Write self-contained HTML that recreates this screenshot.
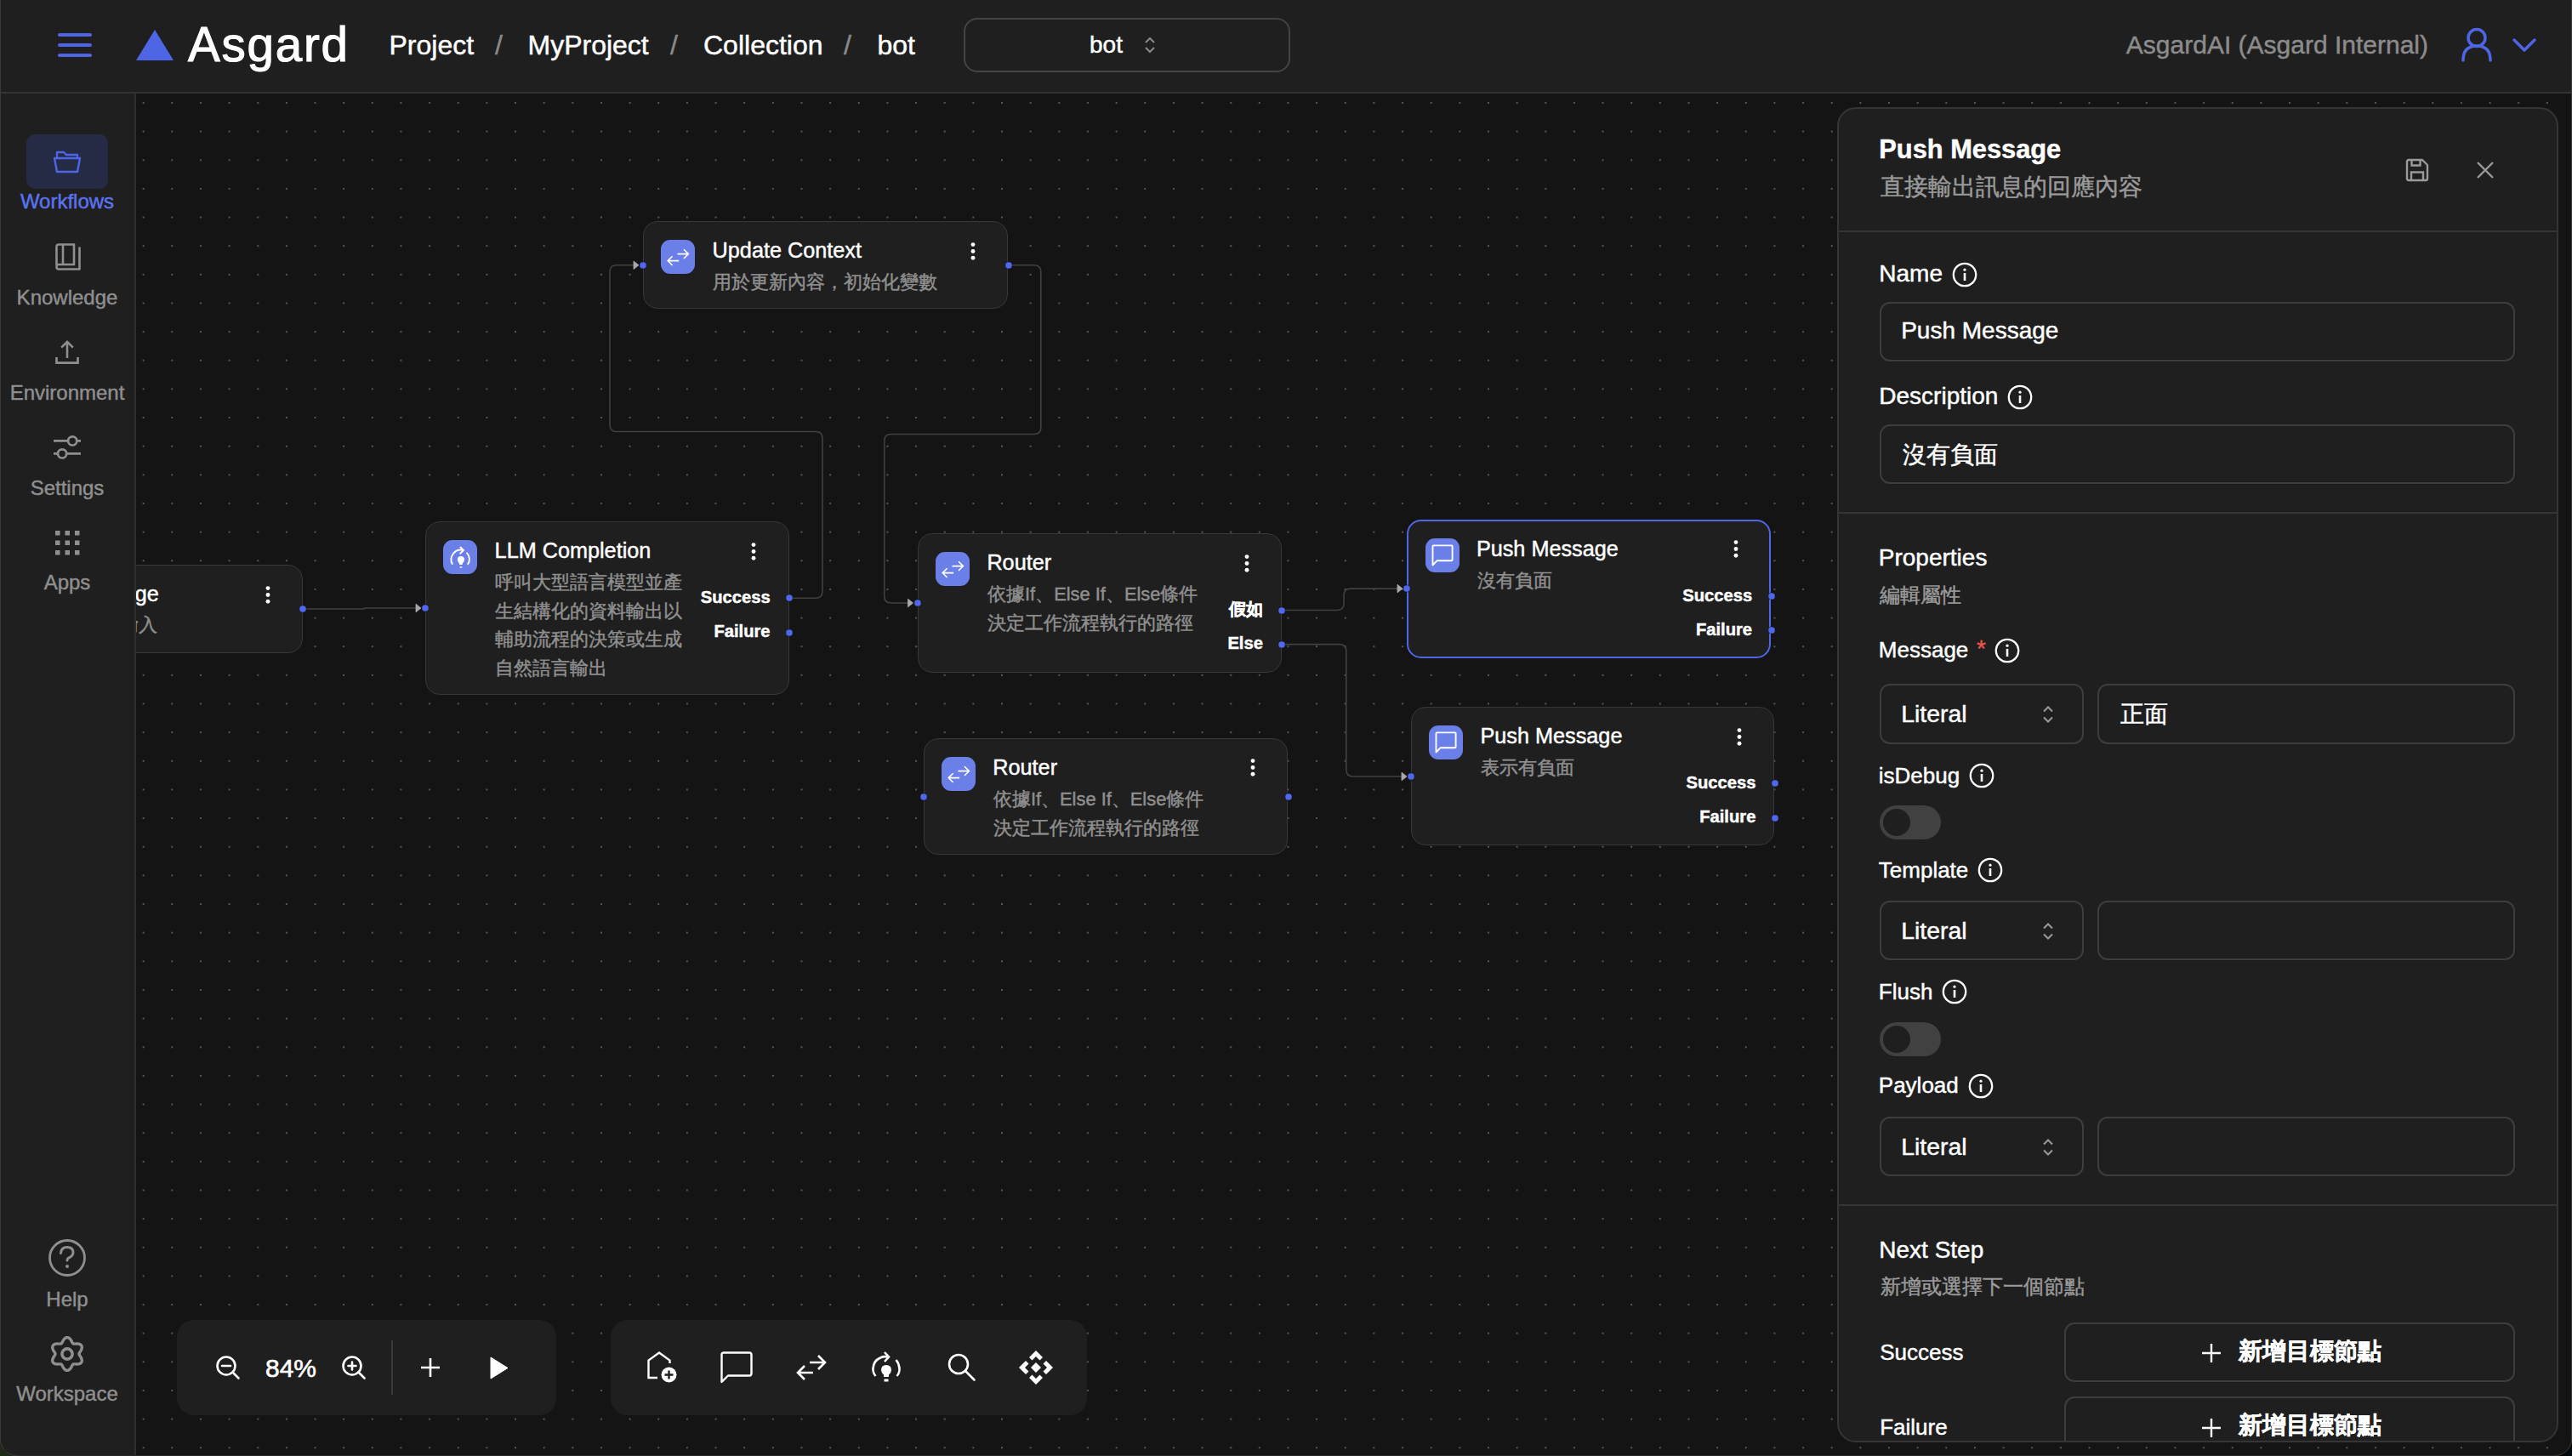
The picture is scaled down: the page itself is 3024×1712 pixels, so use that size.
<!DOCTYPE html>
<html lang="zh-Hant"><head><meta charset="utf-8"><title>Asgard</title>
<style>
html,body{margin:0;padding:0;}
body{width:3024px;height:1712px;position:relative;overflow:hidden;background:#141414;font-family:"Liberation Sans",sans-serif;}
.t{position:absolute;white-space:nowrap;line-height:1;-webkit-text-stroke-width:0.45px;}
.b{position:absolute;box-sizing:border-box;}
svg.b{overflow:visible;}
</style></head><body>

<svg class="b" style="left:0;top:0" width="3024" height="1712"><defs><pattern id="dots" x="-0.575" y="19.025" width="33.645" height="33.645" patternUnits="userSpaceOnUse"><rect x="0" y="0" width="2" height="2" fill="#555"/></pattern></defs><rect x="160" y="110" width="2864" height="1602" fill="url(#dots)"/></svg>
<svg class="b" style="left:0;top:0" width="3024" height="1712"><path d="M356.00 716.00 L427.50 716.00 Q428.00 716.00 428.00 715.50 L428.00 715.50 Q428.00 715.00 428.50 715.00 L489.00 715.00" fill="none" stroke="#404040" stroke-width="1.6"/><path d="M928.50 703.30 L959.00 703.30 Q967.00 703.30 967.00 695.30 L967.00 515.50 Q967.00 507.50 959.00 507.50 L725.00 507.50 Q717.00 507.50 717.00 499.50 L717.00 319.80 Q717.00 311.80 725.00 311.80 L745.00 311.80" fill="none" stroke="#404040" stroke-width="1.6"/><path d="M1185.00 311.80 L1215.80 311.80 Q1223.80 311.80 1223.80 319.80 L1223.80 502.50 Q1223.80 510.50 1215.80 510.50 L1047.70 510.50 Q1039.70 510.50 1039.70 518.50 L1039.70 701.00 Q1039.70 709.00 1047.70 709.00 L1067.50 709.00" fill="none" stroke="#404040" stroke-width="1.6"/><path d="M1507.00 717.50 L1572.00 717.50 Q1580.00 717.50 1580.00 709.50 L1580.00 700.10 Q1580.00 692.10 1588.00 692.10 L1643.00 692.10" fill="none" stroke="#404040" stroke-width="1.6"/><path d="M1507.00 757.60 L1574.80 757.60 Q1582.80 757.60 1582.80 765.60 L1582.80 905.00 Q1582.80 913.00 1590.80 913.00 L1648.00 913.00" fill="none" stroke="#404040" stroke-width="1.6"/><path d="M489.00 710.20 L495.00 715.00 L489.00 719.80 Z" fill="#a8a8a8" stroke="#a8a8a8" stroke-width="0.8" stroke-linejoin="round"/><path d="M745.00 307.00 L751.00 311.80 L745.00 316.60 Z" fill="#a8a8a8" stroke="#a8a8a8" stroke-width="0.8" stroke-linejoin="round"/><path d="M1067.50 704.20 L1073.50 709.00 L1067.50 713.80 Z" fill="#a8a8a8" stroke="#a8a8a8" stroke-width="0.8" stroke-linejoin="round"/><path d="M1643.00 687.30 L1649.00 692.10 L1643.00 696.90 Z" fill="#a8a8a8" stroke="#a8a8a8" stroke-width="0.8" stroke-linejoin="round"/><path d="M1648.00 908.20 L1654.00 913.00 L1648.00 917.80 Z" fill="#a8a8a8" stroke="#a8a8a8" stroke-width="0.8" stroke-linejoin="round"/></svg>
<div class="b" style="left:756.00px;top:260.00px;width:429.00px;height:103.00px;background:#1f1f1f;border:1.7px solid #383838;border-radius:16.8px;"></div>
<svg class="b" style="left:777.30px;top:281.70px;" width="40" height="40" viewBox="0 0 40 40"><rect x="0" y="0" width="40" height="40" rx="11" fill="#6b7fe8"/><path d="M19.5 16.6 H32.4 M27 11.2 L32.4 16.6 L27 22" fill="none" stroke="#fff" stroke-width="1.6"/><path d="M21.2 24.6 H8.2 M13.6 19.2 L8.2 24.6 L13.6 30" fill="none" stroke="#fff" stroke-width="1.6"/></svg>
<div class="t" style="top:281.83px;font-size:25.24px;color:#fff;left:837.60px;">Update Context</div>
<div class="t" style="top:320.98px;font-size:21.87px;color:#8f8f8f;left:838.20px;">用於更新內容，初始化變數</div>
<svg class="b" style="left:1140.70px;top:284.50px;" width="6" height="20" viewBox="0 0 6 20"><circle cx="3" cy="2.6" r="2.45" fill="#fff"/><circle cx="3" cy="10.43" r="2.45" fill="#fff"/><circle cx="3" cy="18.26" r="2.45" fill="#fff"/></svg>
<svg class="b" style="left:751.00px;top:306.50px;" width="10" height="10" viewBox="0 0 10 10"><circle cx="5" cy="5" r="4.1" fill="#5068f0" stroke="#141414" stroke-width="0.6"/></svg>
<svg class="b" style="left:1180.50px;top:306.50px;" width="10" height="10" viewBox="0 0 10 10"><circle cx="5" cy="5" r="4.1" fill="#5068f0" stroke="#141414" stroke-width="0.6"/></svg>
<div class="b" style="left:500.00px;top:613.00px;width:427.60px;height:203.80px;background:#1f1f1f;border:1.7px solid #383838;border-radius:16.8px;"></div>
<svg class="b" style="left:521.30px;top:634.70px;" width="40" height="40" viewBox="0 0 40 40"><rect x="0" y="0" width="40" height="40" rx="11" fill="#6b7fe8"/><path d="M11.1 28.8 A11.4 11.4 0 0 1 23.6 11.9" fill="none" stroke="#fff" stroke-width="1.9"/><path d="M19.9 8 L24 12 L19.7 16.2" fill="none" stroke="#fff" stroke-width="1.9"/><path d="M27.5 14.8 A10.3 10.3 0 0 1 28.8 28.8" fill="none" stroke="#fff" stroke-width="1.9"/><path d="M20.9 19.1 Q25 19.1 25 23 Q25 25 23.3 26.8 L22.4 29.1 H19.4 L18.5 26.8 Q16.9 25 16.9 23 Q16.9 19.1 20.9 19.1 Z" fill="#fff"/><rect x="19.5" y="31.3" width="3" height="1.4" rx="0.7" fill="#fff"/></svg>
<div class="t" style="top:634.83px;font-size:25.24px;color:#fff;left:581.60px;">LLM Completion</div>
<div class="t" style="top:673.98px;font-size:21.87px;color:#8f8f8f;left:582.20px;">呼叫大型語言模型並產</div>
<div class="t" style="top:707.63px;font-size:21.87px;color:#8f8f8f;left:582.20px;">生結構化的資料輸出以</div>
<div class="t" style="top:741.28px;font-size:21.87px;color:#8f8f8f;left:582.20px;">輔助流程的決策或生成</div>
<div class="t" style="top:774.93px;font-size:21.87px;color:#8f8f8f;left:582.20px;">自然語言輸出</div>
<svg class="b" style="left:883.30px;top:637.50px;" width="6" height="20" viewBox="0 0 6 20"><circle cx="3" cy="2.6" r="2.45" fill="#fff"/><circle cx="3" cy="10.43" r="2.45" fill="#fff"/><circle cx="3" cy="18.26" r="2.45" fill="#fff"/></svg>
<svg class="b" style="left:495.00px;top:709.90px;" width="10" height="10" viewBox="0 0 10 10"><circle cx="5" cy="5" r="4.1" fill="#5068f0" stroke="#141414" stroke-width="0.6"/></svg>
<div class="t" style="top:691.71px;font-size:20.19px;color:#fff;font-weight:700;right:2118.40px;">Success</div>
<svg class="b" style="left:923.10px;top:698.10px;" width="10" height="10" viewBox="0 0 10 10"><circle cx="5" cy="5" r="4.1" fill="#5068f0" stroke="#141414" stroke-width="0.6"/></svg>
<div class="t" style="top:731.91px;font-size:20.19px;color:#fff;font-weight:700;right:2118.40px;">Failure</div>
<svg class="b" style="left:923.10px;top:738.50px;" width="10" height="10" viewBox="0 0 10 10"><circle cx="5" cy="5" r="4.1" fill="#5068f0" stroke="#141414" stroke-width="0.6"/></svg>
<div class="b" style="left:1078.80px;top:627.40px;width:428.10px;height:163.50px;background:#1f1f1f;border:1.7px solid #383838;border-radius:16.8px;"></div>
<svg class="b" style="left:1100.10px;top:649.10px;" width="40" height="40" viewBox="0 0 40 40"><rect x="0" y="0" width="40" height="40" rx="11" fill="#6b7fe8"/><path d="M19.5 16.6 H32.4 M27 11.2 L32.4 16.6 L27 22" fill="none" stroke="#fff" stroke-width="1.6"/><path d="M21.2 24.6 H8.2 M13.6 19.2 L8.2 24.6 L13.6 30" fill="none" stroke="#fff" stroke-width="1.6"/></svg>
<div class="t" style="top:649.23px;font-size:25.24px;color:#fff;left:1160.40px;">Router</div>
<div class="t" style="top:688.38px;font-size:21.87px;color:#8f8f8f;left:1161.00px;">依據If、Else If、Else條件</div>
<div class="t" style="top:722.03px;font-size:21.87px;color:#8f8f8f;left:1161.00px;">決定工作流程執行的路徑</div>
<svg class="b" style="left:1462.60px;top:651.90px;" width="6" height="20" viewBox="0 0 6 20"><circle cx="3" cy="2.6" r="2.45" fill="#fff"/><circle cx="3" cy="10.43" r="2.45" fill="#fff"/><circle cx="3" cy="18.26" r="2.45" fill="#fff"/></svg>
<svg class="b" style="left:1073.80px;top:704.15px;" width="10" height="10" viewBox="0 0 10 10"><circle cx="5" cy="5" r="4.1" fill="#5068f0" stroke="#141414" stroke-width="0.6"/></svg>
<div class="t" style="top:706.11px;font-size:20.19px;color:#fff;font-weight:700;right:1539.10px;">假如</div>
<svg class="b" style="left:1502.40px;top:712.50px;" width="10" height="10" viewBox="0 0 10 10"><circle cx="5" cy="5" r="4.1" fill="#5068f0" stroke="#141414" stroke-width="0.6"/></svg>
<div class="t" style="top:746.31px;font-size:20.19px;color:#fff;font-weight:700;right:1539.10px;">Else</div>
<svg class="b" style="left:1502.40px;top:752.90px;" width="10" height="10" viewBox="0 0 10 10"><circle cx="5" cy="5" r="4.1" fill="#5068f0" stroke="#141414" stroke-width="0.6"/></svg>
<div class="b" style="left:1085.70px;top:867.90px;width:428.40px;height:137.30px;background:#1f1f1f;border:1.7px solid #383838;border-radius:16.8px;"></div>
<svg class="b" style="left:1107.00px;top:889.60px;" width="40" height="40" viewBox="0 0 40 40"><rect x="0" y="0" width="40" height="40" rx="11" fill="#6b7fe8"/><path d="M19.5 16.6 H32.4 M27 11.2 L32.4 16.6 L27 22" fill="none" stroke="#fff" stroke-width="1.6"/><path d="M21.2 24.6 H8.2 M13.6 19.2 L8.2 24.6 L13.6 30" fill="none" stroke="#fff" stroke-width="1.6"/></svg>
<div class="t" style="top:889.73px;font-size:25.24px;color:#fff;left:1167.30px;">Router</div>
<div class="t" style="top:928.88px;font-size:21.87px;color:#8f8f8f;left:1167.90px;">依據If、Else If、Else條件</div>
<div class="t" style="top:962.53px;font-size:21.87px;color:#8f8f8f;left:1167.90px;">決定工作流程執行的路徑</div>
<svg class="b" style="left:1469.80px;top:892.40px;" width="6" height="20" viewBox="0 0 6 20"><circle cx="3" cy="2.6" r="2.45" fill="#fff"/><circle cx="3" cy="10.43" r="2.45" fill="#fff"/><circle cx="3" cy="18.26" r="2.45" fill="#fff"/></svg>
<svg class="b" style="left:1080.70px;top:931.55px;" width="10" height="10" viewBox="0 0 10 10"><circle cx="5" cy="5" r="4.1" fill="#5068f0" stroke="#141414" stroke-width="0.6"/></svg>
<svg class="b" style="left:1509.60px;top:931.55px;" width="10" height="10" viewBox="0 0 10 10"><circle cx="5" cy="5" r="4.1" fill="#5068f0" stroke="#141414" stroke-width="0.6"/></svg>
<div class="b" style="left:1654.30px;top:610.80px;width:427.80px;height:162.90px;background:#1f1f1f;border:2.1px solid #5066e6;border-radius:16.8px;"></div>
<svg class="b" style="left:1675.60px;top:632.50px;" width="40" height="40" viewBox="0 0 40 40"><rect x="0" y="0" width="40" height="40" rx="11" fill="#6b7fe8"/><path d="M8.5 31.6 V9.3 Q8.5 8.4 9.4 8.4 H30.7 Q31.6 8.4 31.6 9.3 V25.3 Q31.6 26.2 30.7 26.2 H13.6 Z" fill="none" stroke="#fff" stroke-width="1.9" stroke-linejoin="round"/></svg>
<div class="t" style="top:632.63px;font-size:25.24px;color:#fff;left:1735.90px;">Push Message</div>
<div class="t" style="top:671.78px;font-size:21.87px;color:#8f8f8f;left:1736.50px;">沒有負面</div>
<svg class="b" style="left:2037.80px;top:635.30px;" width="6" height="20" viewBox="0 0 6 20"><circle cx="3" cy="2.6" r="2.45" fill="#fff"/><circle cx="3" cy="10.43" r="2.45" fill="#fff"/><circle cx="3" cy="18.26" r="2.45" fill="#fff"/></svg>
<svg class="b" style="left:1649.30px;top:687.25px;" width="10" height="10" viewBox="0 0 10 10"><circle cx="5" cy="5" r="4.1" fill="#5068f0" stroke="#141414" stroke-width="0.6"/></svg>
<div class="t" style="top:689.51px;font-size:20.19px;color:#fff;font-weight:700;right:963.90px;">Success</div>
<svg class="b" style="left:2077.60px;top:695.90px;" width="10" height="10" viewBox="0 0 10 10"><circle cx="5" cy="5" r="4.1" fill="#5068f0" stroke="#141414" stroke-width="0.6"/></svg>
<div class="t" style="top:729.71px;font-size:20.19px;color:#fff;font-weight:700;right:963.90px;">Failure</div>
<svg class="b" style="left:2077.60px;top:736.30px;" width="10" height="10" viewBox="0 0 10 10"><circle cx="5" cy="5" r="4.1" fill="#5068f0" stroke="#141414" stroke-width="0.6"/></svg>
<div class="b" style="left:1658.90px;top:831.10px;width:427.50px;height:163.30px;background:#1f1f1f;border:1.7px solid #383838;border-radius:16.8px;"></div>
<svg class="b" style="left:1680.20px;top:852.80px;" width="40" height="40" viewBox="0 0 40 40"><rect x="0" y="0" width="40" height="40" rx="11" fill="#6b7fe8"/><path d="M8.5 31.6 V9.3 Q8.5 8.4 9.4 8.4 H30.7 Q31.6 8.4 31.6 9.3 V25.3 Q31.6 26.2 30.7 26.2 H13.6 Z" fill="none" stroke="#fff" stroke-width="1.9" stroke-linejoin="round"/></svg>
<div class="t" style="top:852.93px;font-size:25.24px;color:#fff;left:1740.50px;">Push Message</div>
<div class="t" style="top:892.08px;font-size:21.87px;color:#8f8f8f;left:1741.10px;">表示有負面</div>
<svg class="b" style="left:2042.10px;top:855.60px;" width="6" height="20" viewBox="0 0 6 20"><circle cx="3" cy="2.6" r="2.45" fill="#fff"/><circle cx="3" cy="10.43" r="2.45" fill="#fff"/><circle cx="3" cy="18.26" r="2.45" fill="#fff"/></svg>
<svg class="b" style="left:1653.90px;top:907.75px;" width="10" height="10" viewBox="0 0 10 10"><circle cx="5" cy="5" r="4.1" fill="#5068f0" stroke="#141414" stroke-width="0.6"/></svg>
<div class="t" style="top:909.81px;font-size:20.19px;color:#fff;font-weight:700;right:959.60px;">Success</div>
<svg class="b" style="left:2081.90px;top:916.20px;" width="10" height="10" viewBox="0 0 10 10"><circle cx="5" cy="5" r="4.1" fill="#5068f0" stroke="#141414" stroke-width="0.6"/></svg>
<div class="t" style="top:950.01px;font-size:20.19px;color:#fff;font-weight:700;right:959.60px;">Failure</div>
<svg class="b" style="left:2081.90px;top:956.60px;" width="10" height="10" viewBox="0 0 10 10"><circle cx="5" cy="5" r="4.1" fill="#5068f0" stroke="#141414" stroke-width="0.6"/></svg>
<div class="b" style="left:-70.00px;top:664.40px;width:426.00px;height:103.60px;background:#1f1f1f;border:1.7px solid #383838;border-radius:16.8px;"></div>
<div class="t" style="top:685.93px;font-size:25.24px;color:#fff;right:2837.30px;">Push Message</div>
<div class="t" style="top:724.48px;font-size:21.87px;color:#8f8f8f;right:2839.00px;">接收使用者輸入</div>
<svg class="b" style="left:311.50px;top:689.00px;" width="6" height="20" viewBox="0 0 6 20"><circle cx="3" cy="2.6" r="2.45" fill="#fff"/><circle cx="3" cy="10.43" r="2.45" fill="#fff"/><circle cx="3" cy="18.26" r="2.45" fill="#fff"/></svg>
<svg class="b" style="left:351.00px;top:711.20px;" width="10" height="10" viewBox="0 0 10 10"><circle cx="5" cy="5" r="4.1" fill="#5068f0" stroke="#141414" stroke-width="0.6"/></svg>
<div class="b" style="left:0.00px;top:0.00px;width:3024.00px;height:108.00px;background:#1f1f1f;"></div>
<div class="b" style="left:0.00px;top:108.00px;width:3024.00px;height:2.00px;background:#333;"></div>
<div class="b" style="left:0.00px;top:110.00px;width:158.00px;height:1602.00px;background:#1f1f1f;"></div>
<div class="b" style="left:158.00px;top:110.00px;width:2.00px;height:1602.00px;background:#2e2e2e;"></div>
<div class="b" style="left:0.00px;top:0.00px;width:1.00px;height:1712.00px;background:#3a3a3a;"></div>
<div class="b" style="left:3023.00px;top:0.00px;width:1.00px;height:1712.00px;background:#3a3a3a;"></div>
<div class="b" style="left:0.00px;top:1711.00px;width:3024.00px;height:1.00px;background:#2a2a2a;"></div>
<svg class="b" style="left:0.00px;top:1692.00px;" width="20" height="20" viewBox="0 0 20 20"><path d="M0 0 A20 20 0 0 0 20 20 L0 20 Z" fill="#1f2a19"/><path d="M0.5 0 A19.5 19.5 0 0 0 20 19.5" fill="none" stroke="#3a3a3a" stroke-width="1"/></svg>
<svg class="b" style="left:3004.00px;top:1692.00px;" width="20" height="20" viewBox="0 0 20 20"><path d="M20 0 A20 20 0 0 1 0 20 L20 20 Z" fill="#06090b"/><path d="M19.5 0 A19.5 19.5 0 0 1 0 19.5" fill="none" stroke="#3a3a3a" stroke-width="1"/></svg>
<div class="b" style="left:68.00px;top:39.00px;width:40.00px;height:4.00px;background:#4e65e6;border-radius:2px;"></div>
<div class="b" style="left:68.00px;top:51.00px;width:40.00px;height:4.00px;background:#4e65e6;border-radius:2px;"></div>
<div class="b" style="left:68.00px;top:63.00px;width:40.00px;height:4.00px;background:#4e65e6;border-radius:2px;"></div>
<svg class="b" style="left:160.00px;top:35.00px;" width="44" height="36" viewBox="0 0 44 36"><polygon points="0,36 44,36 22,0" fill="#4e65e6"/></svg>
<div class="t" style="top:25.46px;font-size:56.5px;color:#fff;left:221.00px;letter-spacing:1.8px;-webkit-text-stroke:1.1px #fff;">Asgard</div>
<div class="t" style="top:36.91px;font-size:32px;color:#fff;left:457.50px;">Project</div>
<div class="t" style="top:36.91px;font-size:32px;color:#8a8a8a;left:582.00px;">/</div>
<div class="t" style="top:36.91px;font-size:32px;color:#fff;left:620.50px;">MyProject</div>
<div class="t" style="top:36.91px;font-size:32px;color:#8a8a8a;left:788.00px;">/</div>
<div class="t" style="top:36.91px;font-size:32px;color:#fff;left:827.00px;">Collection</div>
<div class="t" style="top:36.91px;font-size:32px;color:#8a8a8a;left:992.00px;">/</div>
<div class="t" style="top:36.91px;font-size:32px;color:#fff;left:1031.50px;">bot</div>
<div class="b" style="left:1133.00px;top:21.00px;width:384.00px;height:64.00px;border:2px solid #444;border-radius:16px;"></div>
<div class="t" style="top:38.89px;font-size:28px;color:#fff;left:1281.00px;">bot</div>
<svg class="b" style="left:1346.00px;top:43.00px;" width="12" height="20" viewBox="0 0 12 20"><path d="M1 7 L6 2 L11 7 M1 13 L6 18 L11 13" fill="none" stroke="#8a8a8a" stroke-width="2"/></svg>
<div class="t" style="top:37.90px;font-size:30px;color:#8c8c8c;right:169.00px;">AsgardAI (Asgard Internal)</div>
<svg class="b" style="left:2894.00px;top:33.00px;" width="36" height="40" viewBox="0 0 36 40"><circle cx="18" cy="11.5" r="10" fill="none" stroke="#4e65e6" stroke-width="3.5"/><path d="M2 38 C2 25 9 21 18 21 C27 21 34 25 34 38" fill="none" stroke="#4e65e6" stroke-width="3.5" stroke-linecap="round"/></svg>
<svg class="b" style="left:2954.00px;top:45.00px;" width="28" height="16" viewBox="0 0 28 16"><path d="M2 2 L14 14 L26 2" fill="none" stroke="#4e65e6" stroke-width="3.5" stroke-linecap="round" stroke-linejoin="round"/></svg>
<div class="b" style="left:31.00px;top:158.00px;width:96.00px;height:64.00px;background:#262b45;border-radius:10px;"></div>
<svg class="b" style="left:63.00px;top:177.00px;" width="32" height="26" viewBox="0 0 32 26"><path d="M4 8 V2 H12 L15 5 H28 V9" fill="none" stroke="#4e65e6" stroke-width="2.4" stroke-linejoin="round"/><path d="M1 9 H31 L28 25 H4 Z" fill="none" stroke="#4e65e6" stroke-width="2.4" stroke-linejoin="round"/></svg>
<div class="t" style="top:225.18px;font-size:24px;color:#5b73f0;left:79.00px;transform:translateX(-50%);">Workflows</div>
<svg class="b" style="left:65.00px;top:286.00px;" width="30" height="32" viewBox="0 0 30 32"><path d="M1.5 26 V4 Q1.5 1.5 4 1.5 H22 V25 H4 Q1.5 25 1.5 27.5 Q1.5 30.5 4 30.5 H28.5 V4.5" fill="none" stroke="#8f8f8f" stroke-width="2.6" stroke-linejoin="round"/><path d="M9 1.5 V25" stroke="#8f8f8f" stroke-width="2.6"/></svg>
<div class="t" style="top:338.18px;font-size:24px;color:#8f8f8f;left:79.00px;transform:translateX(-50%);">Knowledge</div>
<svg class="b" style="left:65.00px;top:400.00px;" width="28" height="28" viewBox="0 0 28 28"><path d="M14 21 V2.2 M7.2 8.6 L14 1.8 L20.8 8.6" fill="none" stroke="#8f8f8f" stroke-width="2.6"/><path d="M1.5 20 V26.6 H26.5 V20" fill="none" stroke="#8f8f8f" stroke-width="2.7"/></svg>
<div class="t" style="top:449.68px;font-size:24px;color:#8f8f8f;left:79.00px;transform:translateX(-50%);">Environment</div>
<svg class="b" style="left:63.00px;top:511.00px;" width="32" height="30" viewBox="0 0 32 30"><path d="M0 7.4 H17 M27.4 7.4 H32 M0 22.4 H5 M15.2 22.4 H32" stroke="#8f8f8f" stroke-width="2.6"/><circle cx="22.2" cy="7.4" r="5.1" fill="none" stroke="#8f8f8f" stroke-width="2.7"/><circle cx="10.1" cy="22.4" r="5.1" fill="none" stroke="#8f8f8f" stroke-width="2.7"/></svg>
<div class="t" style="top:561.68px;font-size:24px;color:#8f8f8f;left:79.00px;transform:translateX(-50%);">Settings</div>
<svg class="b" style="left:65.00px;top:624.00px;" width="28.5" height="28.5" viewBox="0 0 28.5 28.5"><rect x="0.0" y="0.0" width="5.5" height="5.5" fill="#8f8f8f"/><rect x="11.5" y="0.0" width="5.5" height="5.5" fill="#8f8f8f"/><rect x="23.0" y="0.0" width="5.5" height="5.5" fill="#8f8f8f"/><rect x="0.0" y="11.5" width="5.5" height="5.5" fill="#8f8f8f"/><rect x="11.5" y="11.5" width="5.5" height="5.5" fill="#8f8f8f"/><rect x="23.0" y="11.5" width="5.5" height="5.5" fill="#8f8f8f"/><rect x="0.0" y="23.0" width="5.5" height="5.5" fill="#8f8f8f"/><rect x="11.5" y="23.0" width="5.5" height="5.5" fill="#8f8f8f"/><rect x="23.0" y="23.0" width="5.5" height="5.5" fill="#8f8f8f"/></svg>
<div class="t" style="top:672.68px;font-size:24px;color:#8f8f8f;left:79.00px;transform:translateX(-50%);">Apps</div>
<svg class="b" style="left:57.00px;top:1457.00px;" width="44" height="44" viewBox="0 0 44 44"><circle cx="22" cy="22" r="20.5" fill="none" stroke="#8f8f8f" stroke-width="2.8"/><path d="M14.5 16.5 Q15 9.5 22 9.5 Q29 9.5 29 15.5 Q29 20 23 22.5 Q22 23 22 25" fill="none" stroke="#8f8f8f" stroke-width="3" stroke-linecap="round"/><circle cx="22" cy="32" r="2" fill="#8f8f8f"/></svg>
<div class="t" style="top:1515.88px;font-size:24px;color:#8f8f8f;left:79.00px;transform:translateX(-50%);">Help</div>
<svg class="b" style="left:59.00px;top:1570.00px;" width="40" height="44" viewBox="0 0 40 44"><path d="M34.00 22.00 L34.05 21.63 L34.17 21.26 L34.35 20.87 L34.57 20.47 L34.83 20.05 L35.11 19.61 L35.42 19.14 L35.72 18.66 L36.03 18.15 L36.32 17.63 L36.59 17.09 L36.82 16.53 L37.02 15.97 L37.17 15.41 L37.26 14.85 L37.30 14.30 L37.27 13.76 L37.18 13.25 L37.02 12.76 L36.80 12.30 L36.52 11.88 L36.17 11.50 L35.77 11.16 L35.32 10.87 L34.82 10.63 L34.29 10.43 L33.73 10.28 L33.14 10.16 L32.55 10.09 L31.95 10.05 L31.35 10.04 L30.76 10.05 L30.18 10.08 L29.63 10.11 L29.11 10.13 L28.61 10.15 L28.15 10.14 L27.73 10.10 L27.34 10.02 L27.00 9.88 L26.71 9.65 L26.44 9.36 L26.20 9.01 L25.96 8.61 L25.72 8.18 L25.48 7.71 L25.23 7.22 L24.97 6.71 L24.68 6.20 L24.37 5.68 L24.04 5.18 L23.68 4.70 L23.29 4.25 L22.88 3.84 L22.44 3.48 L21.98 3.17 L21.50 2.92 L21.01 2.75 L20.51 2.64 L20.00 2.60 L19.49 2.64 L18.99 2.75 L18.50 2.92 L18.02 3.17 L17.56 3.48 L17.12 3.84 L16.71 4.25 L16.32 4.70 L15.96 5.18 L15.63 5.68 L15.32 6.20 L15.03 6.71 L14.77 7.22 L14.52 7.71 L14.28 8.18 L14.04 8.61 L13.80 9.01 L13.56 9.36 L13.29 9.65 L13.00 9.88 L12.66 10.02 L12.27 10.10 L11.85 10.14 L11.39 10.15 L10.89 10.13 L10.37 10.11 L9.82 10.08 L9.24 10.05 L8.65 10.04 L8.05 10.05 L7.45 10.09 L6.86 10.16 L6.27 10.28 L5.71 10.43 L5.18 10.63 L4.68 10.87 L4.23 11.16 L3.83 11.50 L3.48 11.88 L3.20 12.30 L2.98 12.76 L2.82 13.25 L2.73 13.76 L2.70 14.30 L2.74 14.85 L2.83 15.41 L2.98 15.97 L3.18 16.53 L3.41 17.09 L3.68 17.63 L3.97 18.15 L4.28 18.66 L4.58 19.14 L4.89 19.61 L5.17 20.05 L5.43 20.47 L5.65 20.87 L5.83 21.26 L5.95 21.63 L6.00 22.00 L5.95 22.37 L5.83 22.74 L5.65 23.13 L5.43 23.53 L5.17 23.95 L4.89 24.39 L4.58 24.86 L4.28 25.34 L3.97 25.85 L3.68 26.37 L3.41 26.91 L3.18 27.47 L2.98 28.03 L2.83 28.59 L2.74 29.15 L2.70 29.70 L2.73 30.24 L2.82 30.75 L2.98 31.24 L3.20 31.70 L3.48 32.12 L3.83 32.50 L4.23 32.84 L4.68 33.13 L5.18 33.37 L5.71 33.57 L6.27 33.72 L6.86 33.84 L7.45 33.91 L8.05 33.95 L8.65 33.96 L9.24 33.95 L9.82 33.92 L10.37 33.89 L10.89 33.87 L11.39 33.85 L11.85 33.86 L12.27 33.90 L12.66 33.98 L13.00 34.12 L13.29 34.35 L13.56 34.64 L13.80 34.99 L14.04 35.39 L14.28 35.82 L14.52 36.29 L14.77 36.78 L15.03 37.29 L15.32 37.80 L15.63 38.32 L15.96 38.82 L16.32 39.30 L16.71 39.75 L17.12 40.16 L17.56 40.52 L18.02 40.83 L18.50 41.08 L18.99 41.25 L19.49 41.36 L20.00 41.40 L20.51 41.36 L21.01 41.25 L21.50 41.08 L21.98 40.83 L22.44 40.52 L22.88 40.16 L23.29 39.75 L23.68 39.30 L24.04 38.82 L24.37 38.32 L24.68 37.80 L24.97 37.29 L25.23 36.78 L25.48 36.29 L25.72 35.82 L25.96 35.39 L26.20 34.99 L26.44 34.64 L26.71 34.35 L27.00 34.12 L27.34 33.98 L27.73 33.90 L28.15 33.86 L28.61 33.85 L29.11 33.87 L29.63 33.89 L30.18 33.92 L30.76 33.95 L31.35 33.96 L31.95 33.95 L32.55 33.91 L33.14 33.84 L33.73 33.72 L34.29 33.57 L34.82 33.37 L35.32 33.13 L35.77 32.84 L36.17 32.50 L36.52 32.12 L36.80 31.70 L37.02 31.24 L37.18 30.75 L37.27 30.24 L37.30 29.70 L37.26 29.15 L37.17 28.59 L37.02 28.03 L36.82 27.47 L36.59 26.91 L36.32 26.37 L36.03 25.85 L35.72 25.34 L35.42 24.86 L35.11 24.39 L34.83 23.95 L34.57 23.53 L34.35 23.13 L34.17 22.74 L34.05 22.37 Z" fill="none" stroke="#8f8f8f" stroke-width="3.4" stroke-linejoin="round"/><circle cx="20" cy="22" r="6.1" fill="none" stroke="#8f8f8f" stroke-width="3.6"/></svg>
<div class="t" style="top:1627.08px;font-size:24px;color:#8f8f8f;left:79.00px;transform:translateX(-50%);">Workspace</div>
<div class="b" style="left:208.00px;top:1552.00px;width:446.00px;height:112.00px;background:#1f1f1f;border-radius:20px;"></div>
<svg class="b" style="left:254.00px;top:1594.00px;" width="28" height="28" viewBox="0 0 28 28"><circle cx="12" cy="12" r="10.5" fill="none" stroke="#fff" stroke-width="2.6"/><path d="M19.5 19.5 L26.5 26.5" stroke="#fff" stroke-width="2.6" stroke-linecap="round"/><path d="M7 12 H17" stroke="#fff" stroke-width="2.6" stroke-linecap="round"/></svg>
<div class="t" style="top:1593.80px;font-size:30px;color:#fff;left:312.00px;-webkit-text-stroke:0.6px #fff;">84%</div>
<svg class="b" style="left:402.00px;top:1594.00px;" width="28" height="28" viewBox="0 0 28 28"><circle cx="12" cy="12" r="10.5" fill="none" stroke="#fff" stroke-width="2.6"/><path d="M19.5 19.5 L26.5 26.5" stroke="#fff" stroke-width="2.6" stroke-linecap="round"/><path d="M7.5 12 H16.5 M12 7.5 V16.5" stroke="#fff" stroke-width="2.6" stroke-linecap="round"/></svg>
<div class="b" style="left:460.00px;top:1576.00px;width:2.00px;height:64.00px;background:#3a3a3a;"></div>
<svg class="b" style="left:495.00px;top:1597.00px;" width="22" height="22" viewBox="0 0 22 22"><path d="M11 0 V22 M0 11 H22" stroke="#fff" stroke-width="2.6"/></svg>
<svg class="b" style="left:576.00px;top:1595.00px;" width="22" height="27" viewBox="0 0 22 27"><path d="M1 1 L21 13.5 L1 26 Z" fill="#fff" stroke="#fff" stroke-width="1" stroke-linejoin="round"/></svg>
<div class="b" style="left:718.00px;top:1552.00px;width:560.00px;height:112.00px;background:#1f1f1f;border-radius:20px;"></div>
<svg class="b" style="left:761.00px;top:1589.00px;" width="36" height="38" viewBox="0 0 36 38"><path d="M12 31 H1.5 V10.5 L14 1.5 L26.5 10.5 V14" fill="none" stroke="#fff" stroke-width="2.4"/><circle cx="25.5" cy="27.5" r="9" fill="#fff"/><path d="M25.5 22.5 V32.5 M20.5 27.5 H30.5" stroke="#1f1f1f" stroke-width="2.4"/></svg>
<svg class="b" style="left:847.00px;top:1589.00px;" width="38" height="36" viewBox="0 0 38 36"><path d="M1.5 36 V4 Q1.5 1.5 4 1.5 H34 Q36.5 1.5 36.5 4 V26 Q36.5 28.5 34 28.5 H9 Z" fill="none" stroke="#fff" stroke-width="2.4" stroke-linejoin="round"/></svg>
<svg class="b" style="left:935.00px;top:1592.00px;" width="38" height="32" viewBox="0 0 38 32"><path d="M17 10 H35 M27 2 L35 10 L27 18" fill="none" stroke="#fff" stroke-width="2.6" stroke-linejoin="miter"/><path d="M21 22 H3 M11 14 L3 22 L11 30" fill="none" stroke="#fff" stroke-width="2.6"/></svg>
<svg class="b" style="left:1025.00px;top:1588.00px;" width="34" height="38" viewBox="0 0 34 38"><path d="M4.5 30 Q1 26 1.5 21 Q2 12 10 8.5 Q14 6.5 19 7.5" fill="none" stroke="#fff" stroke-width="2.6"/><path d="M15 2 L20 7.5 L15 13" fill="none" stroke="#fff" stroke-width="2.6"/><path d="M29.5 30 Q33 26 32.5 21 Q32 15 28.5 11" fill="none" stroke="#fff" stroke-width="2.6"/><path d="M17 17 Q23 17 23 23 Q23 26 20 28.5 V31 H14 V28.5 Q11 26 11 23 Q11 17 17 17 Z" fill="#fff"/><rect x="14.5" y="33.5" width="5" height="3" fill="#fff"/></svg>
<svg class="b" style="left:1114.00px;top:1591.00px;" width="33" height="34" viewBox="0 0 33 34"><circle cx="13" cy="13" r="11" fill="none" stroke="#fff" stroke-width="2.6"/><path d="M21 21 L31.5 31.5" stroke="#fff" stroke-width="2.6" stroke-linecap="round"/></svg>
<svg class="b" style="left:1198.00px;top:1588.00px;" width="40" height="40" viewBox="0 0 40 40"><path d="M20 0 L28 8 L24.5 11.5 L20 7 L15.5 11.5 L12 8 Z" fill="#fff"/><path d="M20 40 L28 32 L24.5 28.5 L20 33 L15.5 28.5 L12 32 Z" fill="#fff"/><path d="M0 20 L8 12 L11.5 15.5 L7 20 L11.5 24.5 L8 28 Z" fill="#fff"/><path d="M40 20 L32 12 L28.5 15.5 L33 20 L28.5 24.5 L32 28 Z" fill="#fff"/><path d="M20 14 L26 20 L20 26 L14 20 Z" fill="#fff"/></svg>
<div class="b" style="left:2160px;top:126px;width:848px;height:1570px;background:#1f1f1f;border:2px solid #353535;border-radius:22px;overflow:hidden;">
<div class="t" style="top:33.22px;font-size:30.8px;color:#fff;font-weight:700;left:47.30px;">Push Message</div>
<div class="t" style="top:77.79px;font-size:28px;color:#9a9a9a;left:49.00px;">直接輸出訊息的回應內容</div>
<svg class="b" style="left:666.00px;top:58.00px" width="28" height="28" viewBox="0 0 28 28"><path d="M2 4 Q2 2 4 2 H20 L26 8 V24 Q26 26 24 26 H4 Q2 26 2 24 Z" fill="none" stroke="#9a9a9a" stroke-width="2.4" stroke-linejoin="round"/><path d="M7.5 2 V8.5 H17.5 V2" fill="none" stroke="#9a9a9a" stroke-width="2.4"/><path d="M7 26 V16.5 H21 V26" fill="none" stroke="#9a9a9a" stroke-width="2.4"/></svg>
<svg class="b" style="left:750.00px;top:62.00px" width="20" height="20" viewBox="0 0 20 20"><path d="M1 1 L19 19 M19 1 L1 19" stroke="#9a9a9a" stroke-width="2.4"/></svg>
<div class="b" style="left:-2.00px;top:143.00px;width:848.00px;height:2.00px;background:#353535;"></div>
<div class="t" style="top:179.59px;font-size:28px;color:#fff;left:47.30px;">Name</div>
<svg class="b" style="left:132.50px;top:179.50px" width="30" height="30" viewBox="0 0 30 30"><circle cx="15" cy="15" r="13.2" fill="none" stroke="#fff" stroke-width="2.3"/><rect x="13.7" y="13" width="2.6" height="9" fill="#fff"/><circle cx="15" cy="9.2" r="1.6" fill="#fff"/></svg>
<div class="b" style="left:48.40px;top:226.50px;width:746.70px;height:70.50px;border:2px solid #3d3d3d;border-radius:12px;"></div>
<div class="t" style="top:247.49px;font-size:28px;color:#fff;left:73.20px;">Push Message</div>
<div class="t" style="top:323.69px;font-size:28px;color:#fff;left:47.30px;">Description</div>
<svg class="b" style="left:197.50px;top:323.80px" width="30" height="30" viewBox="0 0 30 30"><circle cx="15" cy="15" r="13.2" fill="none" stroke="#fff" stroke-width="2.3"/><rect x="13.7" y="13" width="2.6" height="9" fill="#fff"/><circle cx="15" cy="9.2" r="1.6" fill="#fff"/></svg>
<div class="b" style="left:48.40px;top:370.90px;width:746.70px;height:69.90px;border:2px solid #3d3d3d;border-radius:12px;"></div>
<div class="t" style="top:392.79px;font-size:28px;color:#fff;left:74.60px;">沒有負面</div>
<div class="b" style="left:-2.00px;top:474.00px;width:848.00px;height:2.00px;background:#353535;"></div>
<div class="t" style="top:513.59px;font-size:28px;color:#fff;left:46.80px;">Properties</div>
<div class="t" style="top:559.68px;font-size:24px;color:#9a9a9a;left:48.40px;">編輯屬性</div>
<div class="t" style="top:622.79px;font-size:26px;color:#fff;left:46.80px;">Message</div>
<div class="t" style="top:621.09px;font-size:28px;color:#e5534b;left:162.00px;">*</div>
<svg class="b" style="left:183.40px;top:621.50px" width="30" height="30" viewBox="0 0 30 30"><circle cx="15" cy="15" r="13.2" fill="none" stroke="#fff" stroke-width="2.3"/><rect x="13.7" y="13" width="2.6" height="9" fill="#fff"/><circle cx="15" cy="9.2" r="1.6" fill="#fff"/></svg>
<div class="b" style="left:48.40px;top:676.40px;width:239.20px;height:70.90px;border:2px solid #3d3d3d;border-radius:12px;"></div>
<div class="t" style="top:697.35px;font-size:28.4px;color:#fff;left:73.20px;">Literal</div>
<svg class="b" style="left:239.00px;top:701.00px" width="14" height="22" viewBox="0 0 14 22"><path d="M2 7.5 L7 2.5 L12 7.5 M2 14.5 L7 19.5 L12 14.5" fill="none" stroke="#9a9a9a" stroke-width="2"/></svg>
<div class="b" style="left:304.30px;top:676.40px;width:490.80px;height:70.90px;border:2px solid #3d3d3d;border-radius:12px;"></div>
<div class="t" style="top:697.69px;font-size:28px;color:#fff;left:331.00px;">正面</div>
<div class="t" style="top:771.29px;font-size:26px;color:#fff;left:46.80px;">isDebug</div>
<svg class="b" style="left:152.50px;top:769.00px" width="30" height="30" viewBox="0 0 30 30"><circle cx="15" cy="15" r="13.2" fill="none" stroke="#fff" stroke-width="2.3"/><rect x="13.7" y="13" width="2.6" height="9" fill="#fff"/><circle cx="15" cy="9.2" r="1.6" fill="#fff"/></svg>
<div class="b" style="left:48.40px;top:818.80px;width:72.00px;height:40.00px;background:#414141;border-radius:20px;"></div>
<div class="b" style="left:52.40px;top:822.80px;width:32.00px;height:32.00px;background:#1f1f1f;border-radius:16px;"></div>
<div class="t" style="top:881.89px;font-size:26px;color:#fff;left:46.80px;">Template</div>
<svg class="b" style="left:163.30px;top:879.50px" width="30" height="30" viewBox="0 0 30 30"><circle cx="15" cy="15" r="13.2" fill="none" stroke="#fff" stroke-width="2.3"/><rect x="13.7" y="13" width="2.6" height="9" fill="#fff"/><circle cx="15" cy="9.2" r="1.6" fill="#fff"/></svg>
<div class="b" style="left:48.40px;top:930.80px;width:239.20px;height:70.50px;border:2px solid #3d3d3d;border-radius:12px;"></div>
<div class="t" style="top:951.85px;font-size:28.4px;color:#fff;left:73.20px;">Literal</div>
<svg class="b" style="left:239.00px;top:955.50px" width="14" height="22" viewBox="0 0 14 22"><path d="M2 7.5 L7 2.5 L12 7.5 M2 14.5 L7 19.5 L12 14.5" fill="none" stroke="#9a9a9a" stroke-width="2"/></svg>
<div class="b" style="left:304.30px;top:930.80px;width:490.80px;height:70.50px;border:2px solid #3d3d3d;border-radius:12px;"></div>
<div class="t" style="top:1024.69px;font-size:26px;color:#fff;left:46.80px;">Flush</div>
<svg class="b" style="left:121.30px;top:1023.00px" width="30" height="30" viewBox="0 0 30 30"><circle cx="15" cy="15" r="13.2" fill="none" stroke="#fff" stroke-width="2.3"/><rect x="13.7" y="13" width="2.6" height="9" fill="#fff"/><circle cx="15" cy="9.2" r="1.6" fill="#fff"/></svg>
<div class="b" style="left:48.40px;top:1073.50px;width:72.00px;height:40.00px;background:#414141;border-radius:20px;"></div>
<div class="b" style="left:52.40px;top:1077.50px;width:32.00px;height:32.00px;background:#1f1f1f;border-radius:16px;"></div>
<div class="t" style="top:1135.49px;font-size:26px;color:#fff;left:46.80px;">Payload</div>
<svg class="b" style="left:151.50px;top:1133.50px" width="30" height="30" viewBox="0 0 30 30"><circle cx="15" cy="15" r="13.2" fill="none" stroke="#fff" stroke-width="2.3"/><rect x="13.7" y="13" width="2.6" height="9" fill="#fff"/><circle cx="15" cy="9.2" r="1.6" fill="#fff"/></svg>
<div class="b" style="left:48.40px;top:1185.00px;width:239.20px;height:70.00px;border:2px solid #3d3d3d;border-radius:12px;"></div>
<div class="t" style="top:1205.95px;font-size:28.4px;color:#fff;left:73.20px;">Literal</div>
<svg class="b" style="left:239.00px;top:1209.50px" width="14" height="22" viewBox="0 0 14 22"><path d="M2 7.5 L7 2.5 L12 7.5 M2 14.5 L7 19.5 L12 14.5" fill="none" stroke="#9a9a9a" stroke-width="2"/></svg>
<div class="b" style="left:304.30px;top:1185.00px;width:490.80px;height:70.00px;border:2px solid #3d3d3d;border-radius:12px;"></div>
<div class="b" style="left:-2.00px;top:1287.50px;width:848.00px;height:2.00px;background:#353535;"></div>
<div class="t" style="top:1327.99px;font-size:28px;color:#fff;left:47.30px;">Next Step</div>
<div class="t" style="top:1372.68px;font-size:24px;color:#9a9a9a;left:49.10px;">新增或選擇下一個節點</div>
<div class="t" style="top:1449.29px;font-size:26px;color:#fff;left:48.20px;">Success</div>
<div class="b" style="left:265.00px;top:1426.70px;width:530.30px;height:70.40px;border:2px solid #3d3d3d;border-radius:12px;"></div>
<svg class="b" style="left:427.00px;top:1452.00px" width="22" height="22" viewBox="0 0 22 22"><path d="M11 0 V22 M0 11 H22" stroke="#fff" stroke-width="2.4"/></svg>
<div class="t" style="top:1446.79px;font-size:28px;color:#fff;font-weight:700;left:470.00px;">新增目標節點</div>
<div class="t" style="top:1536.99px;font-size:26px;color:#fff;left:48.20px;">Failure</div>
<div class="b" style="left:265.00px;top:1514.30px;width:530.30px;height:70.40px;border:2px solid #3d3d3d;border-radius:12px;"></div>
<svg class="b" style="left:427.00px;top:1539.60px" width="22" height="22" viewBox="0 0 22 22"><path d="M11 0 V22 M0 11 H22" stroke="#fff" stroke-width="2.4"/></svg>
<div class="t" style="top:1534.39px;font-size:28px;color:#fff;font-weight:700;left:470.00px;">新增目標節點</div>
</div>
</body></html>
